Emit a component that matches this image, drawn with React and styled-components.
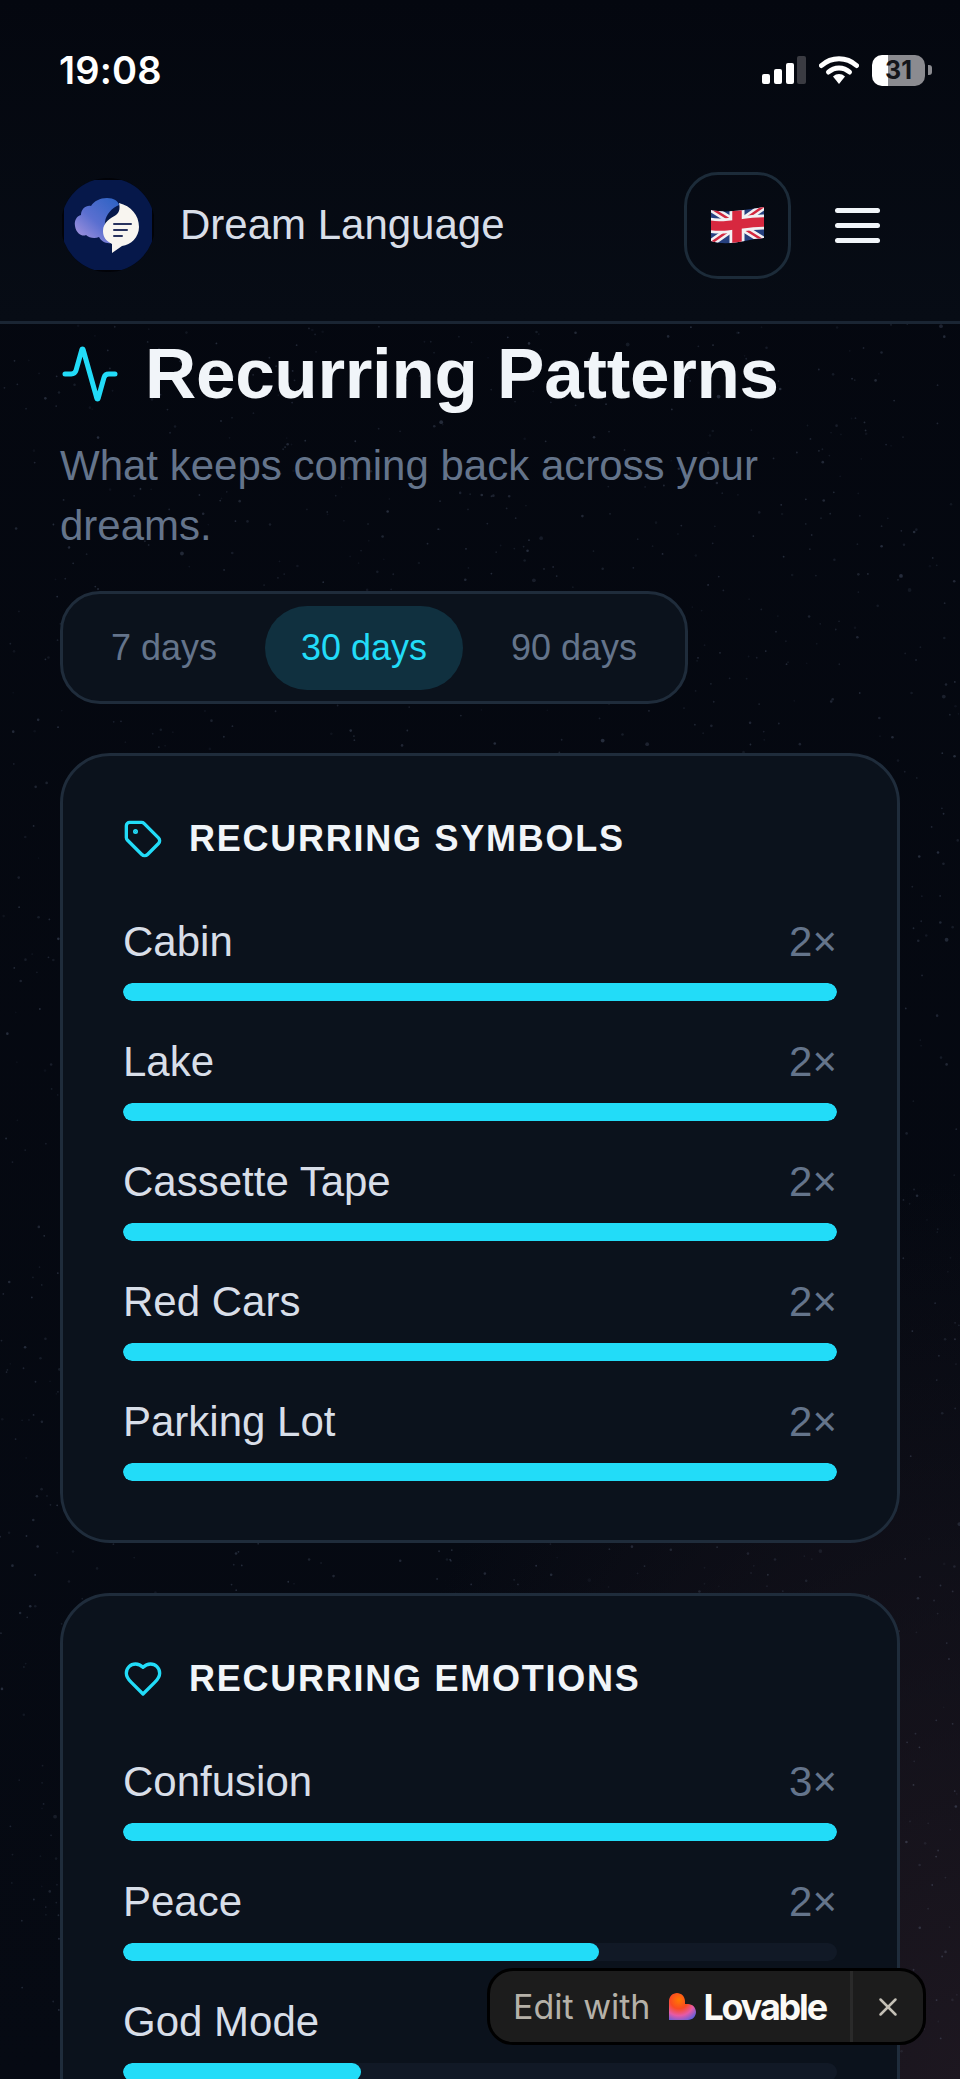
import React, { useMemo } from "react";
import styled, { createGlobalStyle } from "styled-components";
import { Activity, Tag, X } from "lucide-react";

const SANS = `"Liberation Sans", Arial, sans-serif`;
const CYAN = "#22dcf8";

const symbols = [
  { name: "Cabin", count: 2, pct: 100 },
  { name: "Lake", count: 2, pct: 100 },
  { name: "Cassette Tape", count: 2, pct: 100 },
  { name: "Red Cars", count: 2, pct: 100 },
  { name: "Parking Lot", count: 2, pct: 100 },
];

const emotions = [
  { name: "Confusion", count: 3, pct: 100 },
  { name: "Peace", count: 2, pct: 66.6 },
  { name: "God Mode", count: 1, pct: 33.3 },
];

const GlobalStyle = createGlobalStyle`
  html, body {
    margin: 0;
    padding: 0;
    background: #05080f;
  }
  * {
    box-sizing: border-box;
  }
`;

const Page = styled.div`
  position: relative;
  width: 960px;
  height: 2079px;
  overflow: hidden;
  font-family: ${SANS};
  background:
    radial-gradient(ellipse 620px 900px at 100% 100%, #1d1720 0%, rgba(29, 23, 32, 0) 100%),
    linear-gradient(180deg, #04070f 0%, #060a13 100%);
`;

const Stars = styled.svg`
  position: absolute;
  left: 0;
  top: 0;
`;

const TopBar = styled.header`
  position: relative;
  height: 324px;
  padding-top: 50px;
  background: linear-gradient(180deg, #04070f 0%, #070c15 100%);
  border-bottom: 3px solid #1a2533;
`;

const StatusBar = styled.div`
  display: flex;
  align-items: center;
  justify-content: space-between;
  height: 40px;
  padding: 0 28px 0 59px;
`;

const Clock = styled.span`
  font-family: Inter, sans-serif;
  font-weight: 600;
  font-size: 38px;
  letter-spacing: 0.2px;
  color: #ffffff;
`;

const StatusIcons = styled.div`
  display: flex;
  align-items: center;
  gap: 13px;
`;

const Battery = styled.div`
  position: relative;
  width: 53px;
  height: 31px;
  border-radius: 10px;
  overflow: hidden;
  background: linear-gradient(90deg, #ffffff 0 30%, #8b8b90 30% 100%);
  color: #14151a;
  font-family: Inter, sans-serif;
  font-weight: 700;
  font-size: 25px;
  line-height: 31px;
  text-align: center;
`;

const BatteryNub = styled.div`
  width: 4px;
  height: 10px;
  margin-left: -10px;
  border-radius: 0 3px 3px 0;
  background: #8b8b90;
`;

const NavRow = styled.nav`
  display: flex;
  align-items: center;
  height: 106px;
  margin-top: 82px;
  padding: 0 80px 0 62px;
`;

const Brand = styled.div`
  display: flex;
  align-items: center;
  gap: 26px;
  flex: 1;
`;

const BrandName = styled.span`
  font-size: 42px;
  color: #d8dee8;
`;

const LangButton = styled.div`
  display: flex;
  align-items: center;
  justify-content: center;
  width: 107px;
  height: 107px;
  border: 3px solid #1c2b39;
  border-radius: 34px;
`;

const Burger = styled.div`
  display: flex;
  flex-direction: column;
  gap: 10px;
  margin-left: 44px;
`;

const BurgerLine = styled.span`
  display: block;
  width: 45px;
  height: 5px;
  border-radius: 3px;
  background: #f1f5f9;
`;

const Main = styled.main`
  position: relative;
  padding: 10px 60px 0;
`;

const TitleRow = styled.div`
  display: flex;
  align-items: center;
  gap: 25px;
  height: 80px;
  color: ${CYAN};
`;

const ActivityIcon = styled(Activity)`
  flex: none;
`;

const Title = styled.h1`
  margin: 0;
  font-size: 71px;
  font-weight: 700;
  letter-spacing: -0.3px;
  line-height: 80px;
  color: #f1f5f9;
`;

const Subtitle = styled.p`
  margin: 22px 0 0;
  width: 760px;
  font-size: 42px;
  line-height: 60px;
  color: #64748b;
`;

const RangeTabs = styled.div`
  display: inline-flex;
  align-items: center;
  height: 113px;
  margin-top: 35px;
  border: 3px solid #1f2c3b;
  border-radius: 40px;
  background: #0b121c;
`;

const RangeTab = styled.div`
  display: flex;
  align-items: center;
  justify-content: center;
  width: ${(p) => p.$w}px;
  height: 84px;
  border-radius: 42px;
  font-size: 36px;
  color: ${(p) => (p.$active ? CYAN : "#64748b")};
  background: ${(p) => (p.$active ? "#10303f" : "transparent")};
`;

const Card = styled.section`
  margin-top: ${(p) => p.$top}px;
  padding: 63px 60px 59px;
  border: 3px solid #1f2c3b;
  border-radius: 50px;
  background: #0b121c;
`;

const CardHead = styled.div`
  display: flex;
  align-items: center;
  gap: 26px;
  height: 40px;
  margin-bottom: 54px;
  color: ${CYAN};
`;

const CardTitle = styled.h2`
  margin: 0;
  font-size: 36px;
  font-weight: 700;
  letter-spacing: 1.75px;
  color: #f1f5f9;
`;

const Row = styled.div`
  & + & {
    margin-top: 32px;
  }
`;

const RowLabel = styled.div`
  display: flex;
  align-items: center;
  justify-content: space-between;
  height: 56px;
  padding-top: 2px;
  margin-bottom: 14px;
  font-size: 42px;
  color: #d8dee8;
`;

const RowCount = styled.span`
  color: #64748b;
`;

const Track = styled.div`
  height: 18px;
  border-radius: 9px;
  overflow: hidden;
  background: #111926;
`;

const Fill = styled.div`
  height: 100%;
  border-radius: 9px;
  background: ${CYAN};
`;

const Badge = styled.div`
  position: absolute;
  left: 487px;
  top: 1968px;
  display: flex;
  align-items: center;
  width: 439px;
  height: 77px;
  padding-left: 23px;
  border: 3px solid #000000;
  border-radius: 26px;
  background: #1c1c1c;
`;

const BadgeText = styled.span`
  font-family: Inter, sans-serif;
  font-size: 34px;
  color: #b5b1a8;
`;

const BadgeBrand = styled.span`
  margin-left: 7px;
  font-family: Inter, sans-serif;
  font-weight: 700;
  font-size: 36px;
  letter-spacing: -2.2px;
  color: #fbfaf6;
`;

const BadgeLogo = styled.svg`
  margin-left: 19px;
`;

const BadgeClose = styled.div`
  position: absolute;
  right: 0;
  top: 0;
  bottom: 0;
  display: flex;
  align-items: center;
  justify-content: center;
  width: 73px;
  border-left: 3px solid #2a2a2a;
  color: #c4c0b6;
`;

// small seeded random so the star field is the same every load
function makeStars(count) {
  let seed = 20240;
  const rnd = () => {
    seed = (seed * 16807) % 2147483647;
    return seed / 2147483647;
  };
  const stars = [];
  for (let i = 0; i < count; i++) {
    const big = rnd();
    stars.push({
      x: rnd() * 960,
      y: 324 + rnd() * 1755,
      r: big > 0.97 ? 1.9 : big > 0.7 ? 1.3 : 0.9,
      o: 0.05 + rnd() * 0.17,
    });
  }
  return stars;
}

const StarField = () => {
  const stars = useMemo(() => makeStars(2200), []);
  return (
    <Stars width="960" height="2079" viewBox="0 0 960 2079">
      {stars.map((s, i) => (
        <circle key={i} cx={s.x} cy={s.y} r={s.r} fill="#9fb2d8" opacity={s.o} />
      ))}
    </Stars>
  );
};

const Signal = () => (
  <svg width="44" height="28" viewBox="0 0 44 28">
    <rect x="0" y="18" width="8" height="10" rx="2" fill="#fff" />
    <rect x="12" y="13" width="8" height="15" rx="2" fill="#fff" />
    <rect x="24" y="7" width="8" height="21" rx="2" fill="#fff" />
    <rect x="35" y="0" width="9" height="28" rx="2" fill="#3a3b42" />
  </svg>
);

const Wifi = () => (
  <svg width="40" height="30" viewBox="0 0 40 30">
    <path d="M2.5 10.5C12.5 1.5 27.5 1.5 37.5 10.5" fill="none" stroke="#fff" strokeWidth="5" strokeLinecap="round" />
    <path d="M9.5 17C15.5 11.5 24.5 11.5 30.5 17" fill="none" stroke="#fff" strokeWidth="5" strokeLinecap="round" />
    <path d="M14 21.5C17.5 18.2 22.5 18.2 26 21.5L20 29Z" fill="#fff" />
  </svg>
);

const Logo = () => (
  <svg width="92" height="96" viewBox="0 0 92 96">
    <defs>
      <linearGradient id="cloudGrad" x1="0.9" y1="0" x2="0" y2="1">
        <stop offset="0" stopColor="#2f63c4" />
        <stop offset="0.5" stopColor="#5a6fd0" />
        <stop offset="1" stopColor="#b39be0" />
      </linearGradient>
      <clipPath id="logoClip">
        <rect x="2" y="3" width="88" height="90" />
      </clipPath>
    </defs>
    <circle cx="46" cy="48" r="47" fill="#020308" />
    <circle cx="46" cy="48" r="47" fill="#06184a" clipPath="url(#logoClip)" />
    <path
      d="M45 21C52 21 56 24 57 28C50 31 44 37 43 45C42 52 44 60 49 66C44 67 39 64 37 60C33 62 27 61 24 58C21 60 14 57 13 49C12 43 15 39 19 38C19 32 24 28 29 29C32 24 38 21 45 21Z"
      fill="url(#cloudGrad)"
    />
    <path
      d="M57 26C69 29 77 38 77 50C77 60 69 68 60 69L50 76L50 67C44 64 41 60 41 54C41 45 49 41 54 38C58 35 58 30 57 26Z"
      fill="#f8f5f0"
    />
    <path d="M52 47H69M52 53H65M52 59H60" stroke="#28325e" strokeWidth="2" strokeLinecap="round" />
  </svg>
);

const UkFlag = () => (
  <svg width="53" height="38" viewBox="0 0 53 38">
    <defs>
      <clipPath id="flagClip">
        <path d="M0 4C14 7 28 5 53 1V32C36 33 18 41 0 35Z" />
      </clipPath>
    </defs>
    <g clipPath="url(#flagClip)">
      <rect width="53" height="38" fill="#26407f" />
      <path d="M0 2L53 35M53 0L0 37" stroke="#f2f0f2" strokeWidth="7.5" />
      <path d="M0 2L53 35M53 0L0 37" stroke="#d2283f" strokeWidth="2.5" />
      <path d="M-2 19C16 23 34 15 55 16" stroke="#f2f0f2" strokeWidth="15" fill="none" />
      <path d="M26 -2V40" stroke="#f2f0f2" strokeWidth="15" />
      <path d="M-2 19C16 23 34 15 55 16" stroke="#d7283f" strokeWidth="9.5" fill="none" />
      <path d="M26 -2V40" stroke="#d7283f" strokeWidth="9.5" />
    </g>
  </svg>
);

const HeartIcon = () => (
  <svg width="40" height="40" viewBox="0 0 24 24" fill="none" stroke="currentColor" strokeWidth="2" strokeLinecap="round" strokeLinejoin="round">
    <path d="M19 14c1.49-1.46 3-3.21 3-5.5A5.5 5.5 0 0 0 16.5 3c-1.76 0-3 .5-4.5 2-1.5-1.5-2.74-2-4.5-2A5.5 5.5 0 0 0 2 8.5c0 2.3 1.5 4.05 3 5.5l7 7Z" />
  </svg>
);

const LovableMark = () => (
  <BadgeLogo width="27" height="27" viewBox="0 0 27 27">
    <defs>
      <radialGradient id="lovableGrad" cx="10" cy="7" r="23" gradientUnits="userSpaceOnUse">
        <stop offset="0" stopColor="#ff7a00" />
        <stop offset="0.38" stopColor="#fb4a22" />
        <stop offset="0.68" stopColor="#e65aa6" />
        <stop offset="1" stopColor="#5a5fe0" />
      </radialGradient>
    </defs>
    <path
      d="M8 0C12.4 0 16 3.6 16 8V11H19C23.4 11 27 14.6 27 19C27 23.4 23.4 27 19 27H0V8C0 3.6 3.6 0 8 0Z"
      fill="url(#lovableGrad)"
    />
  </BadgeLogo>
);

const StatRow = ({ item }) => (
  <Row>
    <RowLabel>
      <span>{item.name}</span>
      <RowCount>{item.count}×</RowCount>
    </RowLabel>
    <Track>
      <Fill style={{ width: `${item.pct}%` }} />
    </Track>
  </Row>
);

export default function App() {
  return (
    <Page>
      <GlobalStyle />
      <StarField />

      <TopBar>
        <StatusBar>
          <Clock>19:08</Clock>
          <StatusIcons>
            <Signal />
            <Wifi />
            <Battery>31</Battery>
            <BatteryNub />
          </StatusIcons>
        </StatusBar>
        <NavRow>
          <Brand>
            <Logo />
            <BrandName>Dream Language</BrandName>
          </Brand>
          <LangButton>
            <UkFlag />
          </LangButton>
          <Burger>
            <BurgerLine />
            <BurgerLine />
            <BurgerLine />
          </Burger>
        </NavRow>
      </TopBar>

      <Main>
        <TitleRow>
          <ActivityIcon size={60} strokeWidth={2} />
          <Title>Recurring Patterns</Title>
        </TitleRow>
        <Subtitle>What keeps coming back across your dreams.</Subtitle>

        <RangeTabs>
          <RangeTab $w={202}>7 days</RangeTab>
          <RangeTab $w={198} $active>30 days</RangeTab>
          <RangeTab $w={222}>90 days</RangeTab>
        </RangeTabs>

        <Card $top={49}>
          <CardHead>
            <Tag size={40} strokeWidth={2} />
            <CardTitle>RECURRING SYMBOLS</CardTitle>
          </CardHead>
          {symbols.map((s) => (
            <StatRow key={s.name} item={s} />
          ))}
        </Card>

        <Card $top={50}>
          <CardHead>
            <HeartIcon />
            <CardTitle>RECURRING EMOTIONS</CardTitle>
          </CardHead>
          {emotions.map((s) => (
            <StatRow key={s.name} item={s} />
          ))}
        </Card>
      </Main>

      <Badge>
        <BadgeText>Edit with</BadgeText>
        <LovableMark />
        <BadgeBrand>Lovable</BadgeBrand>
        <BadgeClose>
          <X size={30} strokeWidth={2} />
        </BadgeClose>
      </Badge>
    </Page>
  );
}
